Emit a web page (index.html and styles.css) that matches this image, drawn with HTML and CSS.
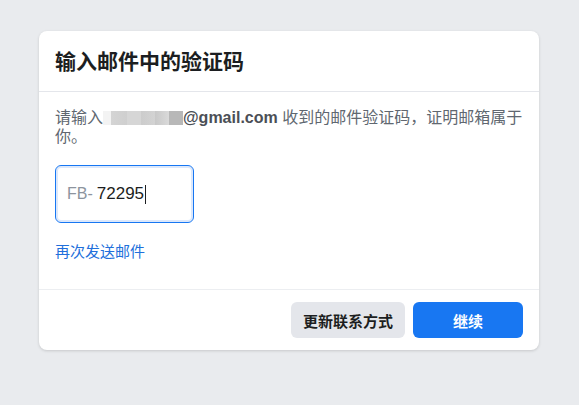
FILE: index.html
```html
<!DOCTYPE html>
<html lang="zh-CN">
<head>
  <meta charset="UTF-8">
  <meta name="viewport" content="width=device-width, initial-scale=1.0">
  <link rel="stylesheet" href="styles.css">
  <title>输入邮件中的验证码</title>
</head>
<body>
  <div class="dialog">
    <div class="dialog-header">输入邮件中的验证码</div>

    <div class="dialog-body">
      <p class="intro">请输入<span class="blurred"></span><b>@gmail.com</b> 收到的邮件验证码，证明邮箱属于你。</p>

      <div class="code-box">
        <span class="prefix">FB-</span>
        <span class="code">72295</span><span class="caret"></span>
      </div>

      <a class="resend" href="#">再次发送邮件</a>
    </div>

    <div class="dialog-footer">
      <button class="btn btn-grey">更新联系方式</button>
      <button class="btn btn-blue">继续</button>
    </div>
  </div>
</body>
</html>
```

FILE: styles.css
```css
html, body {
  margin: 0;
  height: 100%;
}

body {
  background-color: #e9ebee;
  font-family: "Liberation Sans", "Noto Sans CJK SC", sans-serif;
  color: #1c1e21;
  padding: 31px 0 0 39px;
  box-sizing: border-box;
}

.dialog {
  width: 500px;
  background: #fff;
  border-radius: 8px;
  box-shadow: 0 1px 3px rgba(0, 0, 0, 0.15);
}

.dialog-header {
  padding: 18px 16px 17px;
  font-size: 21px;
  line-height: 25px;
  font-weight: bold;
  border-bottom: 1px solid #e4e6eb;
}

.dialog-body {
  padding: 16px 16px 28px;
}

.intro {
  margin: 0;
  font-size: 16px;
  line-height: 19px;
  color: #606770;
}

.intro b {
  color: #4b4f56;
}

.blurred {
  display: inline-block;
  width: 80px;
  height: 14px;
  vertical-align: -2px;
  background: linear-gradient(to right,
    #f3f3f3 0, #f3f3f3 8px,
    #d4d4d4 8px, #cfcfcf 24px,
    #d6d6d6 24px, #d6d6d6 38px,
    #cccccc 38px, #d3d3d3 52px,
    #c8c8c8 52px, #dadada 66px,
    #b8b8b8 66px, #b8b8b8 80px);
  filter: blur(0.6px);
}

.code-box {
  display: flex;
  align-items: center;
  width: 139px;
  height: 58px;
  margin-top: 19px;
  padding: 0 11px;
  box-sizing: border-box;
  border: 1px solid #1877f2;
  border-radius: 6px;
  box-shadow: inset 0 0 0 2px #dce8fb;
  font-size: 17px;
}

.prefix {
  font-size: 16px;
  color: #8d949e;
  margin-right: 4px;
}

.code {
  color: #1c1e21;
}

.caret {
  width: 1px;
  height: 19px;
  background: #1c1e21;
  margin-left: 1px;
}

.resend {
  display: inline-block;
  margin-top: 20px;
  font-size: 15px;
  line-height: 18px;
  color: #216fdb;
  text-decoration: none;
}

.dialog-footer {
  display: flex;
  justify-content: flex-end;
  gap: 8px;
  padding: 12px 16px;
  border-top: 1px solid #eceef1;
}

.btn {
  height: 36px;
  border: none;
  border-radius: 6px;
  font-family: "Liberation Sans", "Noto Sans CJK SC", sans-serif;
  font-size: 15px;
  font-weight: bold;
  cursor: pointer;
}

.btn-grey {
  width: 114px;
  background-color: #e4e6eb;
  color: #1c1e21;
}

.btn-blue {
  width: 110px;
  background-color: #1877f2;
  color: #fff;
}
```
